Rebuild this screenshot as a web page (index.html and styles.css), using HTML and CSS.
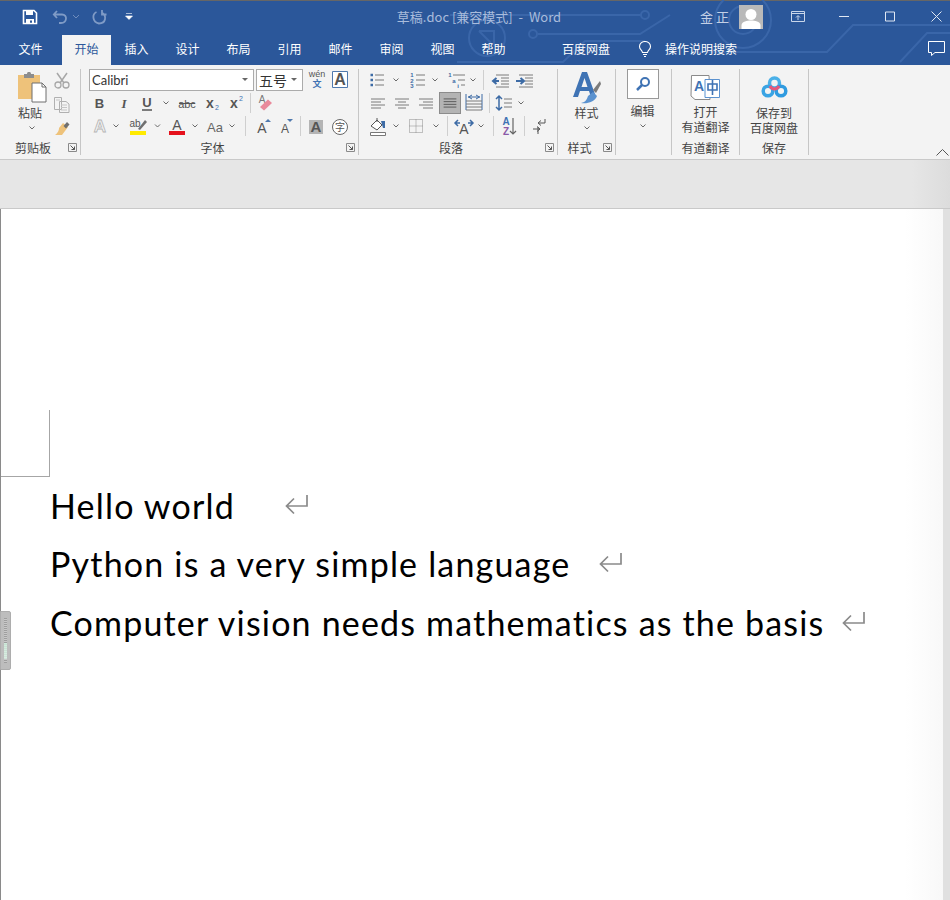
FILE: index.html
```html
<!DOCTYPE html>
<html lang="zh">
<head>
<meta charset="utf-8">
<title>草稿.doc - Word</title>
<link rel="stylesheet" href="styles.css">
</head>
<body>
<svg class="defs" width="0" height="0">
  <symbol id="chev" viewBox="0 0 8 22"><path d="M1.500 9.500 4 12 6.500 9.500" fill="none" stroke="#6a6a6a"/></symbol>
  <symbol id="launch" viewBox="0 0 9 9"><path d="M.5 8.500V.5H8.500V8.500H.5Z" fill="none" stroke="#8a8a8a"/><path d="M2.500 2.500 6.500 6.500M6.500 3.500V6.500H3.500" fill="none" stroke="#555"/></symbol>
  <symbol id="pil" viewBox="0 0 24 21"><path d="M22 1V12H2M9 4.500 1.500 12 9 19.500" fill="none" stroke="#8a8a8a" stroke-width="1.700"/></symbol>
</svg>
<div class="window">
  <header class="head">
    <svg class="circuit" width="650" height="65" viewBox="0 0 650 65">
      <g fill="none" stroke="#3a66a9" stroke-width="2">
        <path d="M150 15H341"/><circle cx="345" cy="15" r="4"/>
        <path d="M238 34H340L370 15"/><circle cx="233" cy="34" r="4"/>
        <path d="M157 62H263L285 41H345"/>
        <circle cx="187" cy="38" r="18"/><path d="M179 31H194V46M179 31 191 43"/>
        <circle cx="443" cy="20" r="28"/><circle cx="443" cy="20" r="14"/>
        <path d="M400 52H527L553 25H650M600 62 627 33H650"/>
      </g>
    </svg>
    <div class="titlebar">
      <div class="qat">
        <svg width="16" height="16" viewBox="0 0 16 16"><path d="M1.500 1.500H12L14.500 4V14.500H1.500Z" fill="none" stroke="#fff" stroke-width="1.600"/><path d="M4 2H11V6H4ZM4 10H12V14.500H10V11.500H8V14.500H4Z" fill="#fff"/></svg>
        <svg class="q-undo" width="16" height="16" viewBox="0 0 16 16"><path d="M5 2 1.800 5.500 5 9M2 5.500H10C16 5.500 15 14 9 14H7" fill="none" stroke="#7f9bc6" stroke-width="1.800"/></svg>
        <svg class="q-arrow" width="8" height="6" viewBox="0 0 8 6"><path d="M1 1 4 4 7 1" fill="none" stroke="#6f8dbd"/></svg>
        <svg class="q-redo" width="16" height="16" viewBox="0 0 16 16"><path d="M5.500 3C1 5 1 13 8 14.500 15 14.500 16 7 11 3.500M11 1V5.500H15.500" fill="none" stroke="#7f9bc6" stroke-width="1.800"/></svg>
        <svg class="q-more" width="8" height="8" viewBox="0 0 8 8"><path d="M1 .5H7M.5 3H7.500L4 6.500Z" fill="#fff" stroke="#fff" stroke-width=".6"/></svg>
      </div>
      <div class="doc-title">草稿.doc [兼容模式]&nbsp; - &nbsp;Word</div>
      <div class="user">金 正</div>
      <div class="avatar">
        <svg width="24" height="24" viewBox="0 0 24 24"><circle cx="12" cy="9.500" r="5.500" fill="#fff"/><path d="M2.500 24V20C3 16.500 8 15.500 12 15.500S21 16.500 21.500 20V24Z" fill="#fff"/></svg>
      </div>
      <div class="winbtns">
        <svg width="14" height="11" viewBox="0 0 14 11"><path d="M.5 .5H13.500V10.500H.5ZM.5 2.500H13.500M7 9V5M5 6.500 7 4.500 9 6.500" fill="none" stroke="#c9d6ea"/></svg>
        <svg class="w-min" width="10" height="11" viewBox="0 0 10 11"><path d="M0 5.500H10" stroke="#dfe7f3"/></svg>
        <svg class="w-max" width="10" height="11" viewBox="0 0 10 11"><path d="M.5 1H9.500V10H.5Z" fill="none" stroke="#dfe7f3"/></svg>
        <svg class="w-close" width="11" height="11" viewBox="0 0 11 11"><path d="M.5 .5 10.500 10.500M10.500 .5 .5 10.500" stroke="#dfe7f3"/></svg>
      </div>
    </div>
    <nav class="tabs">
      <div class="tab tab-file">文件</div>
      <div class="tab tab-active">开始</div>
      <div class="tab">插入</div>
      <div class="tab">设计</div>
      <div class="tab">布局</div>
      <div class="tab">引用</div>
      <div class="tab">邮件</div>
      <div class="tab">审阅</div>
      <div class="tab">视图</div>
      <div class="tab">帮助</div>
      <div class="tab tab-baidu">百度网盘</div>
      <svg class="bulb" width="14" height="16" viewBox="0 0 14 16"><path d="M4.500 11.500C4 9 1.500 8.500 1.500 5.500A5.500 5 0 0 1 12.500 5.500C12.500 8.500 10 9 9.500 11.500ZM5 13.500H9M6 15.500H8" fill="none" stroke="#fff" stroke-width="1.100"/></svg>
      <div class="tell">操作说明搜索</div>
      <svg class="comment" width="17" height="15" viewBox="0 0 17 15"><path d="M.5 .5H16.500V11.500H7L3.500 14.500V11.500H.5Z" fill="none" stroke="#fff"/></svg>
    </nav>
  </header>

  <section class="ribbon">
    <div class="group g-clip">
      <div class="clip-body">
        <div class="paste">
          <svg width="30" height="32" viewBox="0 0 30 32">
            <path d="M1 3H23V27H1Z" fill="#eec27a"/><path d="M7 2H10C10 -1 14 -1 14 2H17V6H7Z" fill="#8d8d8d"/>
            <path d="M15 11H25L29 15V30H15Z" fill="#fff" stroke="#6f6f6f"/><path d="M25 11V15H29" fill="none" stroke="#6f6f6f"/>
          </svg>
          <div class="big-label">粘贴</div>
          <svg width="8" height="6" viewBox="0 8 8 6"><use href="#chev" width="8" height="22"/></svg>
        </div>
        <div class="clip-tools">
          <svg width="16" height="17" viewBox="0 0 16 17"><path d="M3 1 10 11M13 1 6 11" stroke="#a7a7a7" stroke-width="1.500"/><circle cx="4" cy="13" r="3" fill="none" stroke="#a7a7a7" stroke-width="1.300"/><circle cx="12" cy="13" r="3" fill="none" stroke="#a7a7a7" stroke-width="1.300"/></svg>
          <svg width="16" height="16" viewBox="0 0 16 16"><path d="M.5 .5H7.500V12.500H.5ZM5.500 4.500H12L15 7V15.500H5.500Z" fill="#f3f3f3" stroke="#b0b0b0"/><path d="M7 8H13M7 10.500H13M7 13H13M2 3H6" stroke="#c5c5c5"/></svg>
          <svg width="16" height="15" viewBox="0 0 16 15"><path d="M9 2 14 6 8 14 1 14C5 11 5 8 5 7Z" fill="#eec27a"/><path d="M9.500 5 13 1 15.500 3.500 12 7.500Z" fill="#6f6f6f"/></svg>
        </div>
      </div>
      <div class="group-label label-launch">剪贴板<svg class="launcher" width="9" height="9"><use href="#launch"/></svg></div>
    </div>

    <div class="group g-font">
      <div class="rows">
        <div class="row">
          <div class="select sel-font"><span>Calibri</span><i class="caret"></i></div>
          <div class="select sel-size"><span>五号</span><i class="caret"></i></div>
          <svg class="wen" width="24" height="22" viewBox="0 0 24 22"><text class="t-wen" x="12" y="8" text-anchor="middle">wén</text><text class="t-wenzh" x="12" y="18" text-anchor="middle">文</text></svg>
          <svg class="abox" width="16" height="17" viewBox="0 0 16 17"><path d="M.5 .5H15.500V16.500H.5Z" fill="#fff" stroke="#4f79ae"/><text class="t-a13" x="8" y="14" text-anchor="middle">A</text></svg>
        </div>
        <div class="row">
          <svg width="22" height="22" viewBox="0 0 22 22"><text class="t-b" x="10.500" y="16" text-anchor="middle">B</text></svg>
          <svg width="25" height="22" viewBox="0 0 25 22"><text class="t-i" x="13" y="16" text-anchor="middle">I</text></svg>
          <svg width="22" height="22" viewBox="0 0 22 22"><text class="t-u" x="11" y="15" text-anchor="middle">U</text><path d="M6 18H16" stroke="#555" stroke-width="1.500"/></svg>
          <svg width="16" height="22" viewBox="0 0 8 22"><use href="#chev" width="8" height="22"/></svg>
          <svg width="26" height="22" viewBox="0 0 26 22"><text class="t-abc" x="13" y="15.500" text-anchor="middle">abc</text><path d="M5 11.500H21" stroke="#555"/></svg>
          <svg width="23" height="22" viewBox="0 0 23 22"><text class="t-x" x="10" y="16" text-anchor="middle">x</text><text class="t-sub" x="17" y="18" text-anchor="middle">2</text></svg>
          <svg width="24" height="22" viewBox="0 0 24 22"><text class="t-x" x="11" y="16" text-anchor="middle">x</text><text class="t-sub" x="18" y="9" text-anchor="middle">2</text></svg>
          <i class="vsep"></i>
          <svg width="24" height="22" viewBox="0 0 24 22"><text class="t-erase" x="8" y="11" text-anchor="middle">A</text><path d="M6 15 14 7.500 18 11 10 18.500Z" fill="#e98a9b"/></svg>
        </div>
        <div class="row">
          <svg width="21" height="22" viewBox="0 0 21 22"><text class="t-ghost" x="11" y="17" text-anchor="middle">A</text></svg>
          <svg width="17" height="22" viewBox="0 0 17 22"><use href="#chev" x="2" width="8" height="22"/></svg>
          <svg width="22" height="22" viewBox="0 0 22 22"><text class="t-ab" x="8" y="12" text-anchor="middle">ab</text><path d="M11 14 18 5 20 7 13 15Z" fill="#6f6f6f"/><rect x="3" y="16" width="16" height="4" fill="#ffea00"/></svg>
          <svg width="17" height="22" viewBox="0 0 8 22"><use href="#chev" width="8" height="22"/></svg>
          <svg width="22" height="22" viewBox="0 0 22 22"><text class="t-a15" x="11" y="15" text-anchor="middle">A</text><rect x="3" y="16" width="16" height="4" fill="#e5111c"/></svg>
          <svg width="14" height="22" viewBox="0 0 8 22"><use href="#chev" width="8" height="22"/></svg>
          <svg width="26" height="22" viewBox="0 0 26 22"><text class="t-aa" x="13" y="17" text-anchor="middle">Aa</text></svg>
          <svg width="14" height="22" viewBox="0 0 14 22"><use href="#chev" width="8" height="22"/></svg>
          <i class="vsep"></i>
          <svg width="24" height="22" viewBox="0 0 24 22"><text class="t-a14" x="13" y="18" text-anchor="middle">A</text><path d="M16 7 19 4 22 7Z" fill="#4f79ae"/></svg>
          <svg width="24" height="22" viewBox="0 0 24 22"><text class="t-a12" x="12" y="18" text-anchor="middle">A</text><path d="M14 4H20L17 7Z" fill="#4f79ae"/></svg>
          <i class="vsep"></i>
          <svg width="25" height="22" viewBox="0 0 25 22"><rect x="5" y="5" width="14" height="14" fill="#b4b4b4"/><text class="t-a14b" x="12" y="17" text-anchor="middle">A</text></svg>
          <svg width="22" height="22" viewBox="0 0 22 22"><circle cx="11" cy="12" r="7.500" fill="#fff" stroke="#666"/><text class="t-zi" x="11" y="16" text-anchor="middle">字</text></svg>
        </div>
      </div>
      <div class="group-label label-launch">字体<svg class="launcher" width="9" height="9"><use href="#launch"/></svg></div>
    </div>

    <div class="group g-para">
      <div class="rows">
        <div class="row">
          <svg width="24" height="22" viewBox="0 0 24 22"><path d="M6.500 6H9M6.500 11H9M6.500 16H9" stroke="#3d6ba5" stroke-width="2.500"/><path d="M11 6H20M11 11H20M11 16H20" stroke="#7a7a7a"/></svg>
          <svg width="16" height="22" viewBox="0 0 8 22"><use href="#chev" width="8" height="22"/></svg>
          <svg width="24" height="22" viewBox="0 0 24 22"><text class="t-num" x="8" y="8" text-anchor="middle">1</text><text class="t-num" x="8" y="13.500" text-anchor="middle">2</text><text class="t-num" x="8" y="19" text-anchor="middle">3</text><path d="M12 6H21M12 11H21M12 16H21" stroke="#7a7a7a"/></svg>
          <svg width="14" height="22" viewBox="0 0 8 22"><use href="#chev" width="8" height="22"/></svg>
          <svg width="24" height="22" viewBox="0 0 24 22"><text class="t-num" x="8" y="8" text-anchor="middle">1</text><text class="t-num" x="12" y="13.500" text-anchor="middle">a</text><text class="t-num" x="16" y="19" text-anchor="middle">i</text><path d="M11 6H23M16 11H23M19 16H23" stroke="#7a7a7a"/></svg>
          <svg width="14" height="22" viewBox="0 0 8 22"><use href="#chev" width="8" height="22"/></svg>
          <i class="vsep"></i>
          <svg width="26" height="22" viewBox="-2 0 26 22"><path d="M7 6H20M12 9H20M12 12H20M12 15H20M7 18H20" stroke="#7a7a7a"/><path d="M4 12H10M7.500 9 4 12 7.500 15" fill="none" stroke="#3d6ba5" stroke-width="2"/></svg>
          <svg width="24" height="22" viewBox="0 0 24 22"><path d="M6 6H20M12 9H20M12 12H20M12 15H20M6 18H20" stroke="#7a7a7a"/><path d="M3 12H10M7.500 9 11 12 7.500 15" fill="none" stroke="#3d6ba5" stroke-width="2"/></svg>
        </div>
        <div class="row">
          <svg width="24" height="22" viewBox="-3 0 24 22"><path d="M4 7H18M4 10H14M4 13H18M4 16H14" stroke="#7a7a7a"/></svg>
          <svg width="24" height="22" viewBox="-3 0 24 22"><path d="M4 7H18M7 10H15M4 13H18M7 16H15" stroke="#7a7a7a"/></svg>
          <svg width="27" height="22" viewBox="-5 0 27 22"><path d="M2 7H16M6 10H16M2 13H16M6 16H16" stroke="#7a7a7a"/></svg>
          <svg class="active" width="22" height="22" viewBox="0 0 22 22"><path d="M4 6.500H18M4 9.500H18M4 12.500H18M4 15.500H18" stroke="#555"/></svg>
          <svg class="dist" width="22" height="22" viewBox="0 0 22 22"><path d="M2 2V18M18 2V18" stroke="#3d6ba5"/><path d="M4 5H16M8 3 4.500 5 8 7M12 3 15.500 5 12 7" fill="none" stroke="#3d6ba5"/><path d="M2 9H18M2 12H18M2 15H18M2 18H18" stroke="#7a7a7a"/></svg>
          <i class="vsep"></i>
          <svg width="22" height="22" viewBox="0 0 22 22"><path d="M6 4V18M3 7 6 4 9 7M3 15 6 18 9 15" fill="none" stroke="#3d6ba5" stroke-width="1.500"/><path d="M11 7H19M11 11H19M11 15H19" stroke="#7a7a7a"/></svg>
          <svg width="12" height="22" viewBox="0 0 8 22"><use href="#chev" width="8" height="22"/></svg>
        </div>
        <div class="row">
          <svg width="24" height="22" viewBox="-2 0 24 22"><path d="M5 11 11 5 16 10 11 15Z" fill="#fff" stroke="#555"/><path d="M11 3V7" stroke="#555"/><path d="M15 6H19V13H17Z" fill="#3d6ba5"/><path d="M4.500 17.500H19.500V20.500H4.500Z" fill="#fff" stroke="#777"/></svg>
          <svg width="16" height="22" viewBox="0 0 8 22"><use href="#chev" width="8" height="22"/></svg>
          <svg width="24" height="22" viewBox="0 0 24 22"><path d="M5.500 4.500H18.500V17.500H5.500ZM12 4.500V17.500M5.500 11H18.500" fill="none" stroke="#8a8a8a" stroke-dasharray="1 1"/></svg>
          <svg width="16" height="22" viewBox="0 0 8 22"><use href="#chev" width="8" height="22"/></svg>
          <i class="vsep"></i>
          <svg width="26" height="22" viewBox="0 0 26 22"><text class="t-a14" x="13" y="19" text-anchor="middle">A</text><path d="M5 8H9M7 5 4 8 7 11M21 8H17M19 5 22 8 19 11" fill="none" stroke="#3d6ba5" stroke-width="1.500"/></svg>
          <svg width="13" height="22" viewBox="0 0 13 22"><use href="#chev" width="8" height="22"/></svg>
          <i class="vsep"></i>
          <svg width="24" height="22" viewBox="0 0 24 22"><text class="t-az" x="9" y="10" text-anchor="middle">A</text><text class="t-az2" x="9" y="20" text-anchor="middle">Z</text><path d="M16 3V19M13 16 16 19 19 16" fill="none" stroke="#666" stroke-width="1.200"/></svg>
          <i class="vsep"></i>
          <svg width="22" height="22" viewBox="0 0 22 22"><path d="M17 4V8H11M13 5.500 10 8 13 10.500" fill="none" stroke="#555"/><path d="M5 14H11M9 11.500 12 14 9 16.500M10 12V19" fill="none" stroke="#555"/></svg>
        </div>
      </div>
      <div class="group-label label-launch">段落<svg class="launcher" width="9" height="9"><use href="#launch"/></svg></div>
    </div>

    <div class="group g-style">
      <div class="big">
        <svg class="i-style" width="28" height="32" viewBox="0 0 28 32"><path d="M0 25 9 0H14L23 25H18L16 19H7L5 25ZM8.500 15H14.500L11.500 6Z" fill="#3f73b4"/><path d="M15 24 20 20 24 24C22 30 14 32 8 31 13 30 14 27 15 24Z" fill="#5b92cf"/><path d="M20 18 27 9 28 12 23 21Z" fill="#7b7b7b"/></svg>
        <div class="big-label">样式</div>
        <svg width="8" height="6" viewBox="0 8 8 6"><use href="#chev" width="8" height="22"/></svg>
      </div>
      <div class="group-label label-launch">样式<svg class="launcher" width="9" height="9"><use href="#launch"/></svg></div>
    </div>

    <div class="group g-edit">
      <div class="big big-edit">
        <div class="find"><svg width="16" height="16" viewBox="0 0 16 16"><circle cx="10" cy="6" r="4" fill="#fff" stroke="#3f73b4" stroke-width="2"/><path d="M7 9 2 14" stroke="#3f73b4" stroke-width="2.500"/></svg></div>
        <div class="big-label">编辑</div>
        <svg width="8" height="6" viewBox="0 8 8 6"><use href="#chev" width="8" height="22"/></svg>
      </div>
      <div class="group-label"></div>
    </div>

    <div class="group g-trans">
      <div class="big">
        <svg class="i-trans" width="31" height="25" viewBox="0 0 31 25"><path d="M1.500 .5H19L20 24.500H5L1 21Z" fill="#fff" stroke="#8a8a8a"/><path d="M15 4.500H29.500V22.500H15Z" fill="#fff" stroke="#5b92cf"/><text class="t-yd" x="9" y="16" text-anchor="middle">A</text><path d="M18 9H27V15H18ZM22.500 5V20" fill="none" stroke="#3f73b4" stroke-width="1.600"/></svg>
        <div class="big-label two">打开<br>有道翻译</div>
      </div>
      <div class="group-label">有道翻译</div>
    </div>

    <div class="group g-save">
      <div class="big">
        <svg class="i-cloud" width="27" height="22" viewBox="0 0 27 22"><circle cx="13.500" cy="7" r="5" fill="none" stroke="#4ab0e8" stroke-width="3.500"/><circle cx="7" cy="15" r="4.800" fill="none" stroke="#3aa4e4" stroke-width="3.500"/><circle cx="20" cy="15" r="4.800" fill="none" stroke="#2f9be0" stroke-width="3.500"/><path d="M9 10C11 14 16 14 18 10" fill="none" stroke="#e8577a" stroke-width="3"/></svg>
        <div class="big-label two">保存到<br>百度网盘</div>
      </div>
      <div class="group-label">保存</div>
    </div>

    <svg class="collapse" width="13" height="8" viewBox="0 0 13 8"><path d="M.5 7.500 6.500 1.500 12.500 7.500" fill="none" stroke="#555"/></svg>
  </section>

  <div class="band"></div>

  <main class="canvas">
    <article class="page">
      <div class="crop"></div>
      <p class="line"><span>Hello world</span><svg class="mark m-a" width="24" height="21" viewBox="0 0 24 21"><use href="#pil"/></svg></p>
      <p class="line"><span>Python is a very simple language</span><svg class="mark m-b" width="24" height="21" viewBox="0 0 24 21"><use href="#pil"/></svg></p>
      <p class="line"><span>Computer vision needs mathematics as the basis</span><svg class="mark m-c" width="24" height="21" viewBox="0 0 24 21"><use href="#pil"/></svg></p>
    </article>
    <div class="margin-tab"><i></i></div>
  </main>
</div>
</body>
</html>
```
FILE: styles.css
```css
* { box-sizing: border-box; }
html, body { margin: 0; padding: 0; }
body {
  width: 950px;
  height: 900px;
  overflow: hidden;
  background: #e6e6e6;
  font-family: "Noto Sans CJK SC", "Liberation Sans", sans-serif;
  font-size: 12px;
  color: #3c3c3c;
}
.defs { position: absolute; }
.window { display: flex; flex-direction: column; height: 900px; }
svg { display: block; flex: none; }

/* header */
.head { position: relative; background: #2b579a; border-top: 1px solid #666; height: 65px; }
.circuit { position: absolute; left: 300px; top: -1px; }
.titlebar { position: relative; height: 31px; display: flex; align-items: center; }
.qat { display: flex; align-items: center; padding-left: 22px; width: 341px; }
.q-undo { margin-left: 14px; }
.q-arrow { margin-left: 4px; }
.q-redo { margin-left: 11px; }
.q-more { margin-left: 18px; }
.doc-title { width: 276px; text-align: center; color: #a9bcdc; font-size: 13px; line-height: 18px; white-space: nowrap; }
.user { margin-left: 83px; width: 39px; color: #c3d0e6; font-size: 13px; line-height: 18px; white-space: nowrap; }
.avatar { width: 24px; height: 24px; background: #b9b9b9; }
.winbtns { display: flex; align-items: center; padding-left: 28px; }
.w-min { margin-left: 34px; }
.w-max { margin-left: 36px; }
.w-close { margin-left: 36px; }

.tabs { position: relative; height: 33px; display: flex; align-items: center; padding-left: 5px; color: #fff; }
.tab { width: 51px; height: 33px; line-height: 34px; text-align: center; flex: none; }
.tab-file { margin-right: 6px; }
.tab-active { width: 49px; height: 30px; line-height: 28px; align-self: flex-end; background: #f3f3f3; color: #2b579a; }
.tab-baidu { width: 48px; margin-left: 43px; white-space: nowrap; }
.bulb { margin-left: 28px; }
.tell { margin-left: 13px; white-space: nowrap; width: 72px; }
.comment { margin-left: 191px; }

/* ribbon */
.ribbon { position: relative; height: 95px; background: #f3f3f3; border-bottom: 1px solid #c9c9c9; display: flex; padding-top: 4px; }
.group { display: flex; flex-direction: column; height: 86px; border-right: 1px solid #c6c6c6; flex: none; }
.g-clip { width: 81px; }
.g-font { width: 278px; }
.g-para { width: 199px; }
.g-style { width: 58px; }
.g-edit { width: 56px; }
.g-trans { width: 68px; }
.g-save { width: 69px; }
.group-label { position: relative; margin-top: auto; height: 14px; line-height: 14px; text-align: center; color: #444; white-space: nowrap; }
.label-launch { padding-right: 14px; }
.launcher { position: absolute; right: 3px; top: 2px; }

.clip-body { display: flex; padding-left: 17px; }
.paste { width: 30px; display: flex; flex-direction: column; align-items: center; padding-top: 3px; }
.big-label { line-height: 14px; color: #444; white-space: nowrap; text-align: center; }
.paste .big-label { margin: 2px 4px 5px 0; }
.clip-tools { display: flex; flex-direction: column; gap: 8px; padding: 3px 0 0 7px; }

.rows { display: flex; flex-direction: column; padding-left: 8px; margin-top: -1px; }
.row { height: 23px; display: flex; align-items: center; }
.select { height: 22px; background: #fff; border: 1px solid #ababab; display: flex; align-items: center; justify-content: space-between; padding: 0 5px 0 2px; color: #333; }
.sel-font { width: 165px; font-family: "Lato", "Liberation Sans", sans-serif; font-size: 13px; }
.sel-size { width: 47px; margin-left: 2px; font-size: 14px; }
.caret { width: 0; height: 0; border: 3px solid transparent; border-top: 3px solid #666; border-bottom: 0; }
.wen { margin-left: 2px; }
.abox { margin-left: 3px; }
.vsep { width: 1px; height: 20px; background: #cfcfcf; margin: 0 3px; flex: none; }
.g-para .rows { padding-left: 5px; }
.active { background: #b4b4b4; border: 1px solid #8c8c8c; }
.dist { margin-left: 3px; }

.big { display: flex; flex-direction: column; align-items: center; }
.big-edit { padding-right: 2px; }
.i-style { margin-top: 3px; margin-bottom: 2px; }
.big > svg:last-child { margin-top: 5px; }
.find { width: 32px; height: 30px; background: #fff; border: 1px solid #999; display: flex; align-items: center; justify-content: center; margin-bottom: 5px; }
.i-trans { margin-top: 6px; margin-bottom: 4px; }
.i-cloud { margin-top: 7px; margin-bottom: 7px; }
.big-label.two { line-height: 15px; }
.collapse { position: absolute; right: 1px; top: 83px; }

/* svg text */
text { font-family: "Liberation Sans", sans-serif; fill: #555; }
.t-wen { font-size: 9px; }
.t-wenzh { font-size: 9px; font-family: "Noto Sans CJK SC", sans-serif; fill: #3f73b4; font-weight: 700; }
.t-a13 { font-size: 16px; font-weight: 700; fill: #555; }
.t-b { font-size: 13px; font-weight: 700; }
.t-i { font-size: 13px; font-weight: 700; font-style: italic; font-family: "Liberation Serif", serif; }
.t-u { font-size: 13px; font-weight: 700; }
.t-abc { font-size: 11px; }
.t-x { font-size: 14px; font-weight: 700; }
.t-sub { font-size: 7px; fill: #3f73b4; }
.t-erase { font-size: 10px; fill: #777; }
.t-ghost { font-size: 17px; font-weight: 700; fill: #f3f3f3; stroke: #b5b5b5; stroke-width: .8px; }
.t-ab { font-size: 10px; }
.t-a15 { font-size: 14px; }
.t-aa { font-size: 13px; fill: #666; }
.t-a14 { font-size: 14px; fill: #555; }
.t-a12 { font-size: 12px; }
.t-a14b { font-size: 15px; font-weight: 700; }
.t-zi { font-size: 10px; font-family: "Noto Sans CJK SC", sans-serif; }
.t-num { font-size: 6px; fill: #3d6ba5; font-weight: 700; }
.t-az { font-size: 10px; font-weight: 700; fill: #3f73b4; }
.t-az2 { font-size: 10px; font-weight: 700; fill: #8a5aa8; }
.t-yd { font-size: 14px; font-weight: 700; fill: #3f73b4; }

/* band + document */
.band { height: 49px; background: linear-gradient(90deg, #e6e6e6 96%, #dcdcdc); border-bottom: 1px solid #c9c9c9; }
.canvas { position: relative; flex: 1; display: flex; background: #e0e0e0; padding-right: 7px; }
.page { flex: 1; background: linear-gradient(90deg, #fff 96%, #f8f8f8); border-left: 1px solid #8a8a8a; padding-top: 201px; color: #000; }
.crop { width: 49px; height: 67px; border-right: 1px solid #a6a6a6; border-bottom: 1px solid #a6a6a6; }
.line { margin: 0; height: 58.500px; padding: 0 0 2px 49px; display: flex; align-items: center; font-family: "Lato", "Liberation Sans", sans-serif; font-size: 34px; letter-spacing: 1.180px; font-variant-ligatures: none; white-space: nowrap; }
.mark { margin-bottom: 2px; }
.m-a { margin-left: 50px; }
.m-b { margin-left: 29px; }
.m-c { margin-left: 18px; }
.margin-tab { position: absolute; left: 0; top: 402px; width: 11px; height: 59px; background: #bdbdbd; border: 1px solid #adadad; border-radius: 0 2px 2px 0; padding: 6px 3px; }
.margin-tab i { display: block; height: 100%; background: linear-gradient(transparent 55%, rgba(210, 245, 225, .75) 55%, rgba(225, 250, 235, .75) 92%, transparent 92%), repeating-linear-gradient(#9e9e9e 0 1px, #c8c8c8 1px 2px); }
```
